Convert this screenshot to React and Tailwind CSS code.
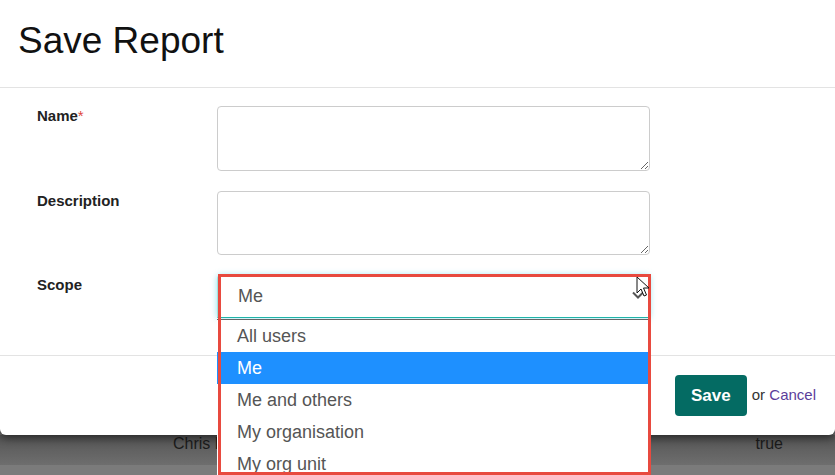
import React from "react";

const font = { fontFamily: '"Liberation Sans", Arial, sans-serif' };

const scopes = ["All users", "Me", "Me and others", "My organisation", "My org unit"];

function Field({ label, required, children }) {
  return (
    <div className="flex">
      <div className="w-[217px] shrink-0 pl-[37px] pt-[1px] text-[15px] font-bold leading-[18px] text-[#222]">
        {label}
        {required && <span className="font-normal text-[#e0483c]">*</span>}
      </div>
      {children}
    </div>
  );
}

export default function App() {
  return (
    <div className="relative h-[475px] w-[835px] overflow-hidden bg-[#6e6e6e]" style={font}>
      {/* modal */}
      <div className="relative z-10 h-[435px] w-full rounded-b-[6px] bg-white shadow-[0_3px_10px_rgba(0,0,0,0.55)]">
        <div className="h-[88px] border-b border-[#e3e3e3] pl-[18px] pt-[19px]">
          <h1 className="text-[37px] leading-[44px] text-[#111]">Save Report</h1>
        </div>

        <div className="flex h-[267px] flex-col gap-[20px] pt-[18px]">
          <Field label="Name" required>
            <textarea className="h-[65px] w-[433px] rounded-[4px] border border-[#cccccc] bg-white outline-none" />
          </Field>
          <Field label="Description">
            <textarea className="h-[64px] w-[433px] rounded-[4px] border border-[#cccccc] bg-white outline-none" />
          </Field>
          <Field label="Scope">
            <div className="relative z-20 w-[433px]">
              <div className="relative flex h-[43px] items-center rounded-t-[4px] border border-[#9fe3e0] border-b-[#1fb3a8] bg-white pl-[20px] text-[18px] text-[#555] shadow-[0_0_6px_rgba(102,217,233,0.7)]">
                Me
                <svg className="absolute left-[414px] top-[15px]" width="12" height="8" viewBox="0 0 12 8">
                  <path d="M1 1.5 L6 6.5 L11 1.5" fill="none" stroke="#555" strokeWidth="2" />
                </svg>
              </div>
              <ul className="absolute left-0 top-[44px] w-[433px] border-t border-[#666] bg-white text-[18px] text-[#555]">
                {scopes.map((s) => (
                  <li
                    key={s}
                    className={
                      "flex h-[32px] items-center pl-[20px] " +
                      (s === "Me" ? "bg-[#1e90ff] text-white" : "")
                    }
                  >
                    {s}
                  </li>
                ))}
              </ul>
              {/* annotation box */}
              <div className="pointer-events-none absolute left-[1px] top-[-1px] h-[201px] w-[433px] border-[3px] border-[#e84a3f]" />
              {/* cursor */}
              <svg className="absolute left-[419px] top-[1px]" width="14" height="22" viewBox="0 0 14 22">
                <path d="M1 1 L1 17 L5 13 L8 20 L10.5 19 L7.5 12 L13 12 Z" fill="#fff" stroke="#111" strokeWidth="1" strokeLinejoin="round" />
              </svg>
            </div>
          </Field>
        </div>

        <div className="flex h-[80px] items-center justify-end gap-[5px] border-t border-[#e3e3e3] pr-[19px]">
          <button className="h-[41px] w-[72px] rounded-[4px] bg-[#046b63] text-[17px] font-bold text-white">
            Save
          </button>
          <span className="text-[15px] text-[#333]">
            or <span className="text-[#5b3d9b]">Cancel</span>
          </span>
        </div>
      </div>

      {/* page behind the modal */}
      <div className="flex h-[30px] items-start bg-gradient-to-b from-[#555] to-[#6e6e6e] pt-[1px] text-[16px] leading-[16px] text-[#1c1c1c]">
        <span className="ml-[173px] w-[45px] overflow-hidden whitespace-nowrap">Chris Lee</span>
        <span className="ml-auto mr-[52px]">true</span>
      </div>
      <div className="h-[10px] bg-[#7b7b7b]" />
    </div>
  );
}
